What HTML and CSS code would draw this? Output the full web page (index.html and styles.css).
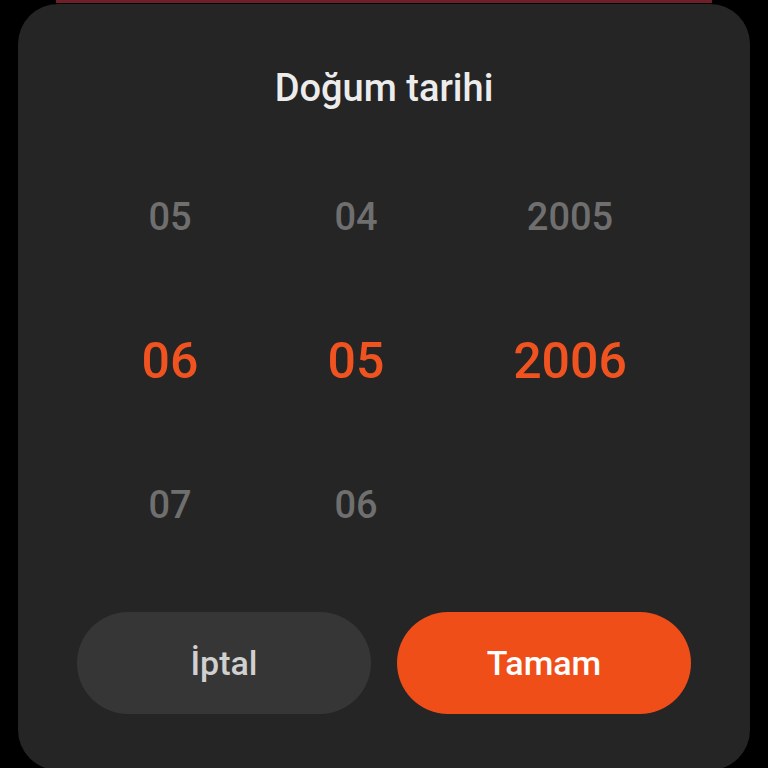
FILE: index.html
```html
<!DOCTYPE html>
<html lang="tr">
<head>
  <meta charset="UTF-8">
  <meta name="viewport" content="width=device-width, initial-scale=1.0">
  <title>Doğum tarihi</title>
  <link rel="stylesheet" href="styles.css">
</head>
<body>

  <div class="sheet-edge"></div>

  <div class="dialog">
    <h1 class="title">Doğum tarihi</h1>

    <div class="picker">
      <div class="column">
        <span class="item">05</span>
        <span class="item selected">06</span>
        <span class="item">07</span>
      </div>
      <div class="column">
        <span class="item">04</span>
        <span class="item selected">05</span>
        <span class="item">06</span>
      </div>
      <div class="column">
        <span class="item">2005</span>
        <span class="item selected">2006</span>
        <span class="item"></span>
      </div>
    </div>

    <div class="actions">
      <button class="cancel">İptal</button>
      <button class="confirm">Tamam</button>
    </div>
  </div>

</body>
</html>
```

FILE: styles.css
```css
* {
  margin: 0;
  padding: 0;
  box-sizing: border-box;
}

body {
  width: 768px;
  height: 768px;
  background: #000;
  font-family: 'Roboto', 'Noto Sans', sans-serif;
  overflow: hidden;
  position: relative;
}

/* thin red strip of the sheet behind the dialog */
.sheet-edge {
  position: absolute;
  top: 0;
  left: 56px;
  width: 656px;
  height: 3px;
  background: #6e1f28;
}

.dialog {
  margin: 4px 18px 0;
  height: 766px;
  background: #252525;
  border-radius: 40px;
  padding-top: 60px;
  position: relative;
}

.title {
  text-align: center;
  font-size: 38px;
  font-weight: 500;
  color: #ececec;
  line-height: 48px;
}

.picker {
  margin: 33px 59px 0;
  display: grid;
  grid-template-columns: 186px 186px 1fr;
}

.column {
  display: flex;
  flex-direction: column;
  align-items: center;
}

.item {
  height: 144px;
  display: flex;
  align-items: center;
  font-size: 38px;
  font-weight: 500;
  color: #6f6f6f;
}

.item.selected {
  font-size: 50px;
  color: #f0531f;
}

.actions {
  margin: 35px 59px 0;
  display: grid;
  grid-template-columns: 1fr 1fr;
  gap: 26px;
}

.actions button {
  height: 102px;
  border: none;
  border-radius: 51px;
  font-family: inherit;
  font-size: 34px;
  font-weight: 500;
}

.cancel {
  background: #363636;
  color: #d0d0d0;
}

.confirm {
  background: #f04e19;
  color: #fff;
  font-size: 35px;
}
```
